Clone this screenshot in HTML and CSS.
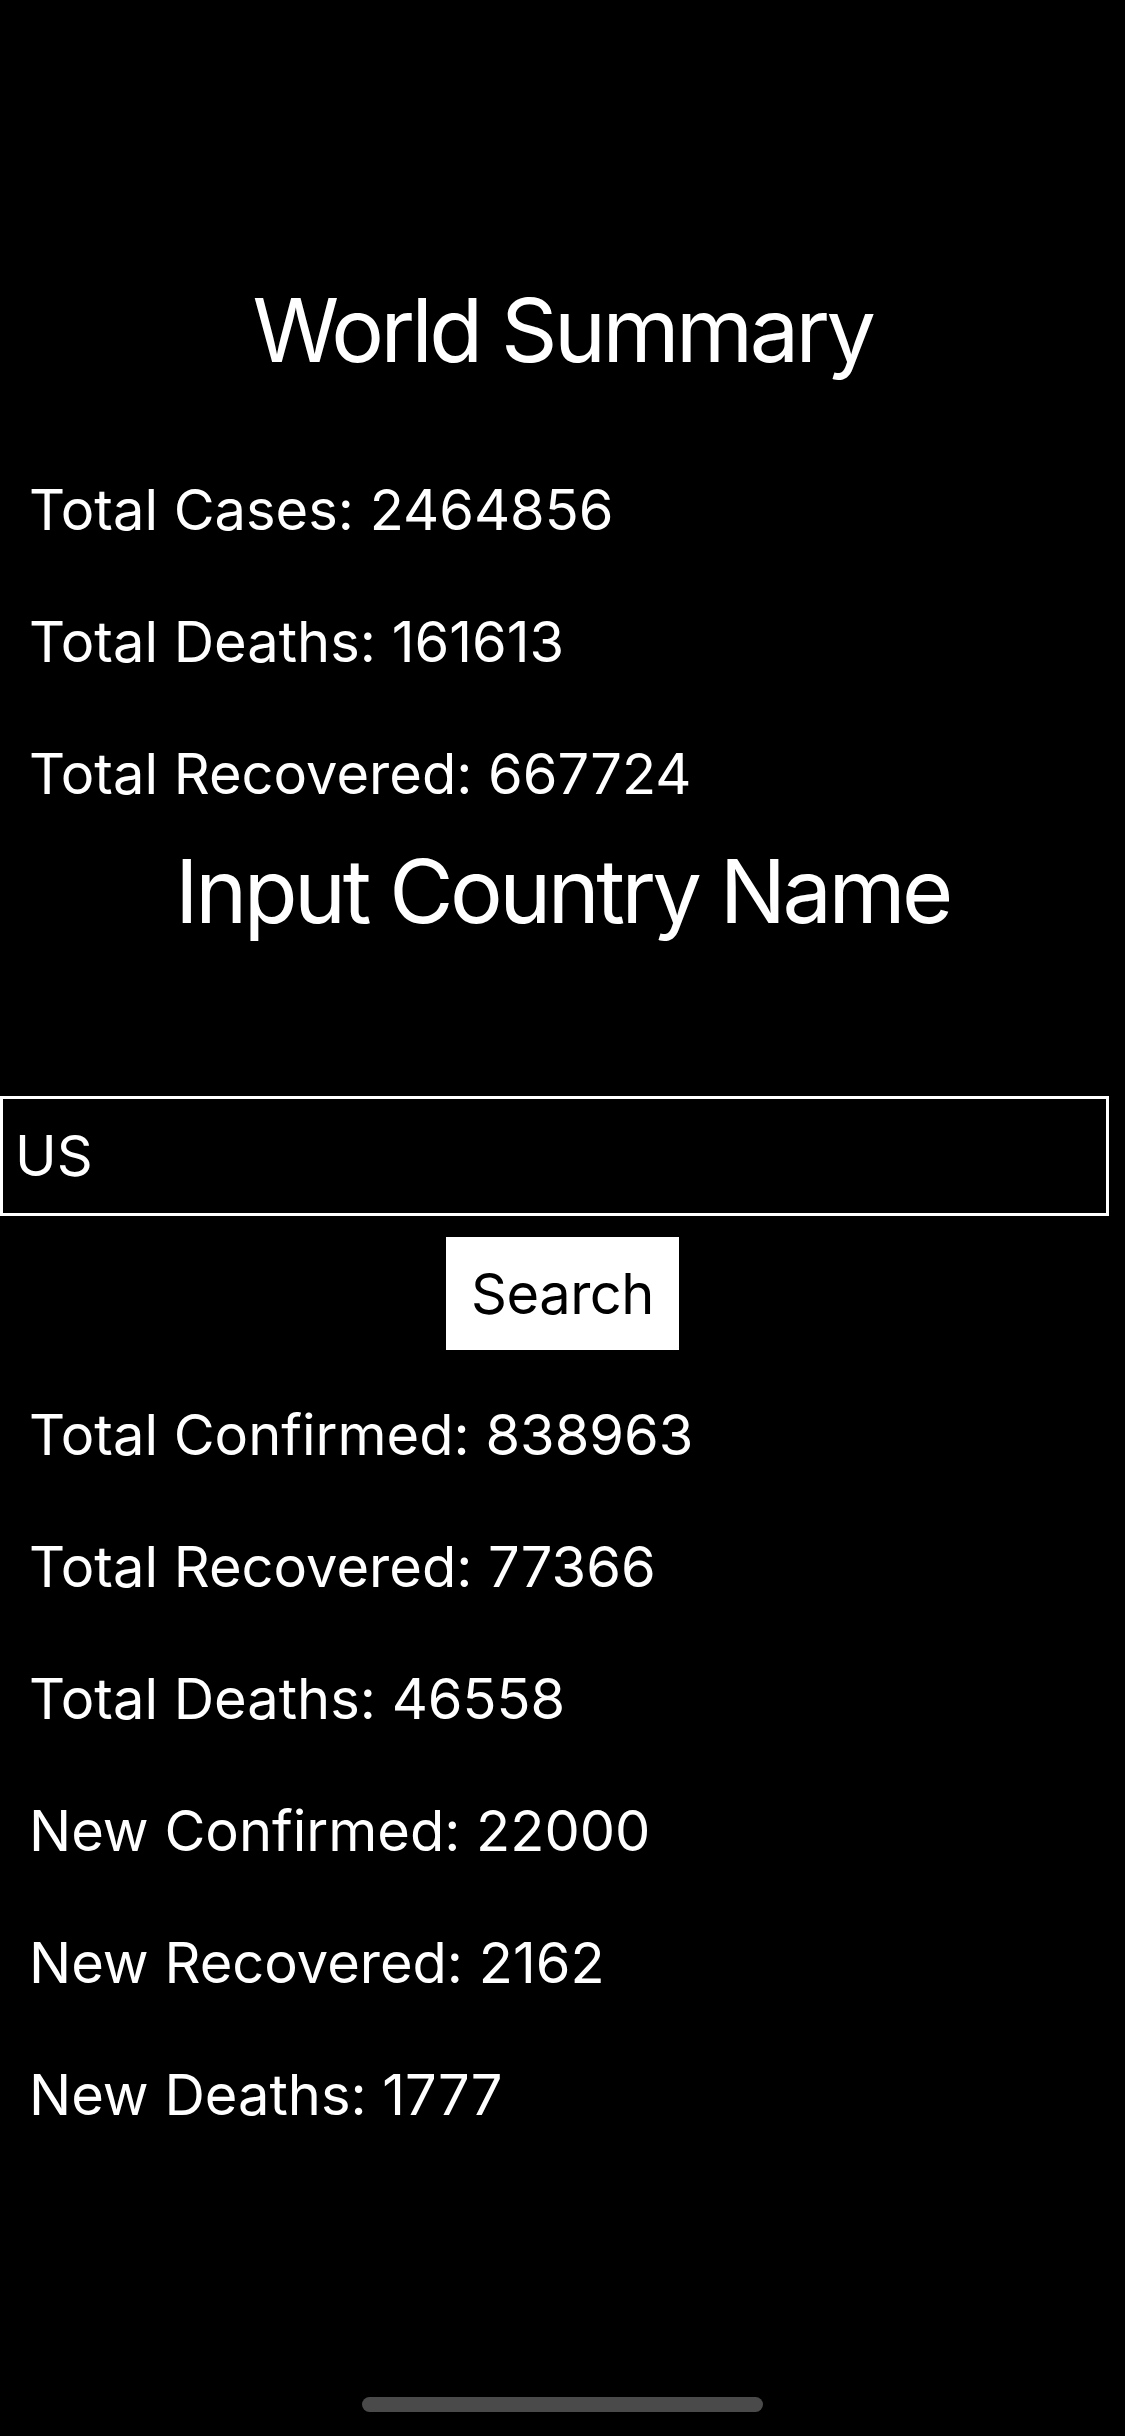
FILE: index.html
```html
<!DOCTYPE html>
<html>
<head>
<meta charset="utf-8">
<link rel="stylesheet" href="styles.css">
</head>
<body>
<main class="screen">
  <h1 class="title">World Summary</h1>
  <div class="stats world">
    <p class="stat">Total Cases: 2464856</p>
    <p class="stat">Total Deaths: 161613</p>
    <p class="stat">Total Recovered: 667724</p>
  </div>
  <h2 class="title subtitle">Input Country Name</h2>
  <input class="country-input" type="text" value="US">
  <div class="actions">
    <button class="search-btn" type="button">Search</button>
  </div>
  <div class="stats country">
    <p class="stat">Total Confirmed: 838963</p>
    <p class="stat">Total Recovered: 77366</p>
    <p class="stat">Total Deaths: 46558</p>
    <p class="stat">New Confirmed: 22000</p>
    <p class="stat">New Recovered: 2162</p>
    <p class="stat">New Deaths: 1777</p>
  </div>
</main>
<div class="home-indicator"></div>
</body>
</html>
```

FILE: styles.css
```css
html, body {
  margin: 0;
  padding: 0;
  background: #000;
}
body {
  width: 1125px;
  height: 2436px;
  position: relative;
  overflow: hidden;
  color: #fff;
  font-family: "Inter", "Roboto", "Liberation Sans", sans-serif;
}
.screen {
  display: flex;
  flex-direction: column;
  padding-top: 275px;
}
.title {
  margin: 0;
  font-size: 88px;
  font-weight: 400;
  line-height: 110px;
  text-align: center;
  letter-spacing: -3.5px;
}
.subtitle {
  line-height: 104px;
  margin-top: -1px;
}
.stats {
  display: flex;
  flex-direction: column;
  padding-left: 29px;
}
.world {
  margin-top: 59px;
}
.stat {
  margin: 0;
  font-size: 56px;
  line-height: 132px;
  height: 132px;
  letter-spacing: 0;
}
.country-input {
  box-sizing: border-box;
  margin-top: 153px;
  width: 1109px;
  height: 120px;
  border: 3px solid #fff;
  border-radius: 0;
  background: #000;
  color: #fff;
  font-family: inherit;
  font-size: 56px;
  padding: 0 12px;
  outline: none;
}
.actions {
  display: flex;
  justify-content: center;
  margin-top: 21px;
}
.search-btn {
  width: 233px;
  height: 113px;
  background: #fff;
  color: #000;
  border: none;
  border-radius: 0;
  padding: 0;
  font-family: inherit;
  font-size: 56px;
  letter-spacing: -0.5px;
}
.country {
  margin-top: 19px;
}
.home-indicator {
  position: absolute;
  left: 362px;
  bottom: 24px;
  width: 401px;
  height: 15px;
  border-radius: 8px;
  background: #4a4a4a;
}
```
